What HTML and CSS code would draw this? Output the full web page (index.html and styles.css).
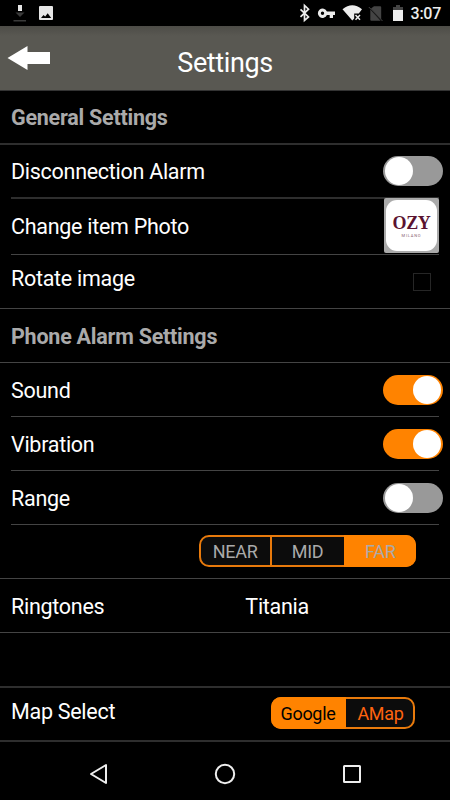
FILE: index.html
```html
<!DOCTYPE html>
<html lang="en">
<head>
  <meta charset="UTF-8">
  <meta name="viewport" content="width=device-width, initial-scale=1.0">
  <title>Settings</title>
  <link rel="stylesheet" href="styles.css">
</head>
<body>
  <div class="status-bar">
    <svg class="status-icons" width="450" height="26" viewBox="0 0 450 26">
      <!-- download -->
      <path d="M18 5h4v6h-4z" fill="#e6e6e6"/>
      <path d="M15.500 12.500h9L20 17z" fill="#3a3a3a"/>
      <path d="M13.500 20h12.500v1.500H13.500z" fill="#3a3a3a"/>
      <!-- picture -->
      <rect x="39" y="6" width="14" height="14" rx="1" fill="#e6e6e6"/>
      <path d="M41 18l2.500-3 1.700 1.500 2.500-3.200 3.500 4.700z" fill="#000"/>
      <!-- bluetooth -->
      <path d="M300.500 9.300l8 7.700-4 3.500V5.500l4 3.700-8 7.700" fill="none" stroke="#ececec" stroke-width="1.700"/>
      <!-- vpn key -->
      <path fill-rule="evenodd" d="M326.900 11.400a4.700 4.700 0 1 0 0 3.600h2.800v3h3.300v-3h2v-3.600zM322.500 11.500a1.700 1.700 0 1 1 0 3.400 1.700 1.700 0 0 1 0-3.400z" fill="#ececec"/>
      <!-- wifi -->
      <path d="M342.500 9.200Q352.300 1.200 362 9.200l-3.200 4.200h-4.600v5.200l-1.900 2z" fill="#ececec"/>
      <path d="M355.500 15l4.500 4.700M360 15l-4.500 4.700" stroke="#ececec" stroke-width="1.500"/>
      <!-- no sim -->
      <path d="M374 6.200h6.200q1 0 1 1v12.300L371 8.500zM370.300 9.500l10.400 11.300h-9.400q-1 0-1-1z" fill="#444"/>
      <path d="M368.800 7l13.700 14" stroke="#444" stroke-width="1"/>
      <!-- battery -->
      <path d="M393 10V7h3V5h4v2h3v3z" fill="#444"/>
      <path d="M393 10h10v11h-10z" fill="#ececec"/>
    </svg>
    <span class="time">3:07</span>
  </div>

  <header class="header">
    <svg class="back" width="44" height="24" viewBox="0 0 44 24">
      <path d="M.5 12L20.500 0v6H43v12H20.500v6z" fill="#fff"/>
    </svg>
    <h1>Settings</h1>
  </header>

  <main>
    <div class="row title thick">General Settings</div>
    <div class="row inset thick">
      <span>Disconnection Alarm</span>
      <div class="switch"></div>
    </div>
    <div class="row inset photo-row">
      <span>Change item Photo</span>
      <div class="photo">
        <div class="photo-inner">
          <span class="brand">OZY</span>
          <span class="city">MILANO</span>
        </div>
      </div>
    </div>
    <div class="row rotate-row">
      <span>Rotate image</span>
      <div class="checkbox"></div>
    </div>
    <div class="row title low">Phone Alarm Settings</div>
    <div class="row inset">
      <span class="low">Sound</span>
      <div class="switch on"></div>
    </div>
    <div class="row inset">
      <span class="low">Vibration</span>
      <div class="switch on"></div>
    </div>
    <div class="row inset">
      <span class="low">Range</span>
      <div class="switch"></div>
    </div>
    <div class="row range-row">
      <div class="segments range">
        <div class="segment">NEAR</div>
        <div class="segment">MID</div>
        <div class="segment active">FAR</div>
      </div>
    </div>
    <div class="row ringtone-row low">
      <span>Ringtones</span>
      <span class="ringtone">Titania</span>
    </div>
    <div class="row empty thick"></div>
    <div class="row map-row thick">
      <span>Map Select</span>
      <div class="segments map">
        <div class="segment active">Google</div>
        <div class="segment">AMap</div>
      </div>
    </div>
  </main>

  <nav class="nav-bar">
    <svg width="20" height="22" viewBox="0 0 20 22">
      <path d="M3 11l15-9v18z" fill="none" stroke="#eee" stroke-width="2" stroke-linejoin="round"/>
    </svg>
    <svg width="22" height="22" viewBox="0 0 22 22">
      <circle cx="11" cy="11" r="9.200" fill="none" stroke="#eee" stroke-width="2"/>
    </svg>
    <svg width="20" height="22" viewBox="0 0 20 22">
      <rect x="2" y="3" width="16" height="16" rx=".5" fill="none" stroke="#eee" stroke-width="2"/>
    </svg>
  </nav>
</body>
</html>
```
FILE: styles.css
```css
* {
  box-sizing: border-box;
}

body {
  margin: 0;
  width: 450px;
  height: 800px;
  overflow: hidden;
  background: #000;
  color: #fff;
  font-family: Roboto, sans-serif;
  font-size: 21.5px;
  letter-spacing: -0.28px;
}

.status-bar {
  position: relative;
  height: 26px;
  display: flex;
  justify-content: flex-end;
  padding-right: 9px;
}

.status-icons {
  position: absolute;
  left: 0;
  top: 0;
}

.time {
  font-size: 16px;
  font-weight: 500;
  line-height: 28px;
  color: #ececec;
}

.header {
  height: 65px;
  display: grid;
  grid-template-columns: 60px 1fr 60px;
  background: linear-gradient(#4d4c47, #595852 10px);
  border-bottom: 1px solid #333;
}

.back {
  margin: 20px 0 0 7px;
}

h1 {
  margin: 5px 0 0;
  font-size: 27px;
  font-weight: 400;
  letter-spacing: -0.4px;
  line-height: 64px;
  text-align: center;
}

.row {
  height: 54px;
  display: flex;
  align-items: center;
  justify-content: space-between;
  padding: 0 7px 0 11px;
  border-bottom: 1px solid #444;
}

.thick {
  border-bottom: 2px solid #2e2e2e;
}

.title {
  color: #aaa;
  font-weight: 700;
  letter-spacing: -0.24px;
}

/* divider stops short of the screen edges */
.inset {
  margin: 0 11px;
  padding: 0;
}

.low {
  padding-top: 2px;
}

.switch {
  width: 60px;
  height: 30px;
  margin-right: -4px;
  padding: 1px 2px;
  border-radius: 15px;
  background: #999;
  display: flex;
}

.switch::before {
  content: "";
  width: 28px;
  height: 28px;
  border-radius: 50%;
  background: #fff;
}

.switch.on {
  background: #ff8300;
  justify-content: flex-end;
}

.photo-row {
  height: 56px;
}

.photo {
  width: 55px;
  height: 55px;
  margin-top: -2px;
  padding: 2px;
  border-radius: 2px;
  background: #aaa;
}

.photo-inner {
  height: 51px;
  border-radius: 11px;
  background: #fff;
  display: flex;
  flex-direction: column;
  align-items: center;
  padding-top: 13px;
}

.brand {
  font: 700 18px/20px "Liberation Serif", serif;
  color: #5a1230;
}

.city {
  font-size: 4px;
  line-height: 5px;
  letter-spacing: 0.8px;
  color: #8a6070;
}

.rotate-row {
  padding: 0 19px 6px 11px;
}

.checkbox {
  width: 18px;
  height: 18px;
  margin-top: 6px;
  border: 1px solid #262626;
}

.segments {
  display: flex;
  border: 2px solid #e87a0c;
  border-radius: 10px;
  background: #0c0c0c;
}

.segment {
  display: flex;
  align-items: center;
  justify-content: center;
  font-size: 18px;
}

.range-row {
  justify-content: flex-end;
  padding: 0 34px 1px 0;
}

.range {
  width: 217px;
  height: 32px;
  color: #aaa;
}

.range .segment {
  width: 70px;
  padding: 1px 1px 0 0;
}

.range .segment + .segment {
  width: 74px;
  border-left: 2px solid #e87a0c;
}

.range .segment.active {
  width: 73px;
  margin: -2px -2px -2px 0;
  background: #ff8300;
  border-color: #ff8300;
  border-radius: 0 10px 10px 0;
}

.ringtone-row {
  justify-content: flex-start;
}

.ringtone {
  margin-left: 141px;
}

.empty {
  height: 55px;
}

.map-row {
  padding: 0 35px 6px 11px;
}

.map {
  width: 144px;
  height: 32px;
  margin-top: 4px;
  color: #ff640f;
}

.map .segment {
  width: 67px;
  padding: 1px 0 0 2px;
}

.map .segment.active {
  width: 75px;
  margin: -2px 0 -2px -2px;
  padding: 1px 1px 0 0;
  background: #ff8300;
  border-radius: 10px 0 0 10px;
  color: #000;
}

.nav-bar {
  height: 58px;
  display: flex;
  justify-content: space-between;
  align-items: center;
  padding: 6px 88px 0 88px;
}
```
